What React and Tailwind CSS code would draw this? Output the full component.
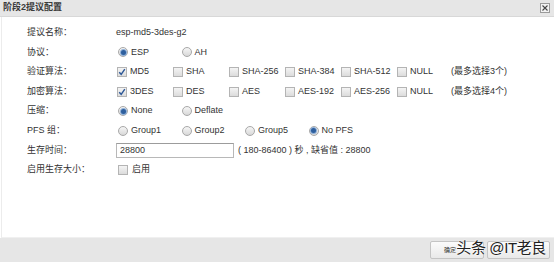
import React from 'react';

const font = { fontFamily: '"Liberation Sans", "Noto Sans CJK SC", sans-serif' };

const Check = ({ on }) => (
    <span className="w-[10px] h-[10px] border border-[#b4b4b4] bg-gradient-to-b from-[#f4f4f4] to-[#dcdcdc] flex items-center justify-center shrink-0">
        {on && (
            <svg width="8" height="8" viewBox="0 0 8 8">
                <path d="M1.2 4.2 L3.2 6.3 L6.8 1.2" fill="none" stroke="#2b5797" strokeWidth="1.4" />
            </svg>
        )}
    </span>
);

const Radio = ({ on }) => (
    <span className="w-[10px] h-[10px] rounded-full border border-[#a8a8a8] bg-gradient-to-b from-[#f6f6f6] to-[#d8d8d8] flex items-center justify-center shrink-0">
        {on && <span className="w-[5px] h-[5px] rounded-full bg-[#2e5f9e] ring-1 ring-[#8fb0d8]" />}
    </span>
);

const Row = ({ label, children }) => (
    <div className="flex items-center h-[19.6px]">
        <div className="w-[114px] pl-[25px] shrink-0 whitespace-nowrap">{label}</div>
        <div className="flex items-center whitespace-nowrap">{children}</div>
    </div>
);

const CheckOpt = ({ on, text }) => (
    <label className="flex items-center gap-[3px] w-[56px] pl-[1px]">
        <Check on={on} />
        <span>{text}</span>
    </label>
);

const RadioOpt = ({ on, text }) => (
    <label className="flex items-center gap-[3px] w-[63.5px] pl-[2px]">
        <Radio on={on} />
        <span>{text}</span>
    </label>
);

const App = () => {
    return (
        <div className="w-[554px] h-[262px] bg-white text-[9px] text-[#333] flex flex-col relative overflow-hidden" style={font}>
            {/* title bar */}
            <div className="h-[17px] bg-[#e6e6e6] border-b border-[#d8d8d8] flex items-center justify-between px-[3px] shrink-0">
                <span className="font-bold text-[9px] text-[#3a3a3a]">阶段2提议配置</span>
                <span className="w-[10px] h-[10px] border border-[#9a9a9a] bg-[#f2f2f2] flex items-center justify-center mr-[1px]">
                    <svg width="6" height="6" viewBox="0 0 6 6">
                        <path d="M0.5 0.5 L5.5 5.5 M5.5 0.5 L0.5 5.5" stroke="#444" strokeWidth="1.1" />
                    </svg>
                </span>
            </div>

            {/* body */}
            <div className="flex-1 pt-[6px] border-l border-[#ececec] border-b border-b-[#f0f0f0] ml-[1px]">
                <Row label="提议名称：">
                    <span>esp-md5-3des-g2</span>
                </Row>
                <Row label="协议：">
                    <RadioOpt on text="ESP" />
                    <RadioOpt text="AH" />
                </Row>
                <Row label="验证算法：">
                    <CheckOpt on text="MD5" />
                    <CheckOpt text="SHA" />
                    <CheckOpt text="SHA-256" />
                    <CheckOpt text="SHA-384" />
                    <CheckOpt text="SHA-512" />
                    <CheckOpt text="NULL" />
                    <span className="ml-[-1px]">(最多选择3个)</span>
                </Row>
                <Row label="加密算法：">
                    <CheckOpt on text="3DES" />
                    <CheckOpt text="DES" />
                    <CheckOpt text="AES" />
                    <CheckOpt text="AES-192" />
                    <CheckOpt text="AES-256" />
                    <CheckOpt text="NULL" />
                    <span className="ml-[-1px]">(最多选择4个)</span>
                </Row>
                <Row label="压缩：">
                    <RadioOpt on text="None" />
                    <RadioOpt text="Deflate" />
                </Row>
                <Row label="PFS 组：">
                    <RadioOpt text="Group1" />
                    <RadioOpt text="Group2" />
                    <RadioOpt text="Group5" />
                    <RadioOpt on text="No PFS" />
                </Row>
                <Row label="生存时间：">
                    <div className="w-[118px] h-[15px] border border-[#b8b8b8] border-t-[#9c9c9c] bg-white flex items-center px-[3px] mr-[4px]">
                        28800
                    </div>
                    <span>( 180-86400 ) 秒 , 缺省值 : 28800</span>
                </Row>
                <Row label="启用生存大小：">
                    <label className="flex items-center gap-[4px] pl-[2px]">
                        <Check />
                        <span>启用</span>
                    </label>
                </Row>
            </div>

            {/* footer */}
            <div className="h-[24px] bg-[#e6e6e6] flex items-center justify-end gap-[3px] pr-[4px] shrink-0">
                <button className="w-[54px] h-[18px] bg-gradient-to-b from-[#fbfbfb] to-[#e9e9e9] border border-[#c4c4c4] rounded-[2px] text-[6px] text-[#333] flex items-center justify-start pl-[13px]">
                    确定
                </button>
                <button className="w-[63px] h-[18px] bg-gradient-to-b from-[#fbfbfb] to-[#e9e9e9] border border-[#c4c4c4] rounded-[2px]" />
            </div>

            {/* watermark */}
            <div className="absolute right-[8px] bottom-[3px] text-[15px] text-[#222] tracking-tight [text-shadow:0_0_2px_#fff,0_0_2px_#fff]">
                头条 @IT老良
            </div>
        </div>
    );
};

export default App;
